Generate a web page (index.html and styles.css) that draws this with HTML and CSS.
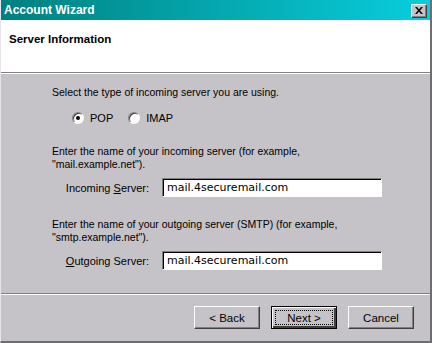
FILE: index.html
```html
<!DOCTYPE html>
<html lang="en">
<head>
    <meta charset="UTF-8">
    <title>Account Wizard</title>
    <link rel="stylesheet" href="styles.css">
</head>
<body>
    <div class="window">
        <div class="titlebar">
            <span class="title">Account Wizard</span>
            <button class="close-btn" aria-label="Close">
                <svg width="8" height="7" viewBox="0 0 8 7">
                    <path d="M0 0h2l2 2.5L6 0h2L5 3.5 8 7H6L4 4.5 2 7H0l3-3.5z" fill="#000"/>
                </svg>
            </button>
        </div>
        <div class="header">
            <h1>Server Information</h1>
        </div>
        <div class="content">
            <p class="line">Select the type of incoming server you are using.</p>
            <div class="radios">
                <label class="radio"><span class="dot checked"></span>POP</label>
                <label class="radio"><span class="dot"></span>IMAP</label>
            </div>
            <p class="para">Enter the name of your incoming server (for example,<br>"mail.example.net").</p>
            <div class="field">
                <label class="field-label">Incoming <u>S</u>erver:</label>
                <div class="input">mail.4securemail.com</div>
            </div>
            <p class="para">Enter the name of your outgoing server (SMTP) (for example,<br>"smtp.example.net").</p>
            <div class="field">
                <label class="field-label"><u>O</u>utgoing Server:</label>
                <div class="input">mail.4securemail.com</div>
            </div>
        </div>
        <div class="footer">
            <button class="btn">&lt; Back</button>
            <button class="btn default"><span class="focus">Next &gt;</span></button>
            <button class="btn">Cancel</button>
        </div>
    </div>
</body>
</html>
```

FILE: styles.css
```css
body, html {
    margin: 0;
    padding: 0;
    font-family: "Liberation Sans", Arial, sans-serif;
    font-size: 10.5px;
    color: #000;
}

.window {
    width: 432px;
    height: 343px;
    box-sizing: border-box;
    background-color: #c5c3c7;
    border-left: 1px solid #e6e4e8;
    border-right: 2px solid #6e6d70;
    border-bottom: 2px solid #6e6d70;
    display: flex;
    flex-direction: column;
}

.titlebar {
    height: 20px;
    background: linear-gradient(to right, #008080, #08cedc);
    display: flex;
    align-items: center;
    justify-content: space-between;
    padding: 0 3px 0 3px;
}

.title {
    color: #fff;
    font-weight: bold;
    font-size: 12px;
}

.close-btn {
    width: 16px;
    height: 14px;
    padding: 0;
    margin-top: 1px;
    background-color: #c5c3c7;
    border: 1px solid;
    border-color: #fff #404040 #404040 #fff;
    box-shadow: inset -1px -1px 0 #808080;
    display: flex;
    align-items: center;
    justify-content: center;
}

.header {
    height: 53px;
    background-color: #fff;
    border-bottom: 1px solid #808080;
    box-shadow: 0 1px 0 #fff;
    box-sizing: border-box;
    padding: 12px 0 0 8px;
}

.header h1 {
    margin: 0;
    font-size: 11.5px;
    line-height: 14px;
    font-weight: bold;
}

.content {
    flex-grow: 1;
    padding: 13px 0 0 51px;
    border-bottom: 1px solid #808080;
    box-shadow: 0 1px 0 #fff;
}

.line, .para {
    margin: 0;
    line-height: 13px;
}

.radios {
    display: flex;
    gap: 15px;
    margin: 12px 0 0 20px;
    height: 13px;
}

.radio {
    display: flex;
    align-items: center;
    gap: 6px;
    font-size: 11px;
}

.dot {
    width: 12px;
    height: 12px;
    box-sizing: border-box;
    border-radius: 50%;
    background-color: #fff;
    border: 1px solid;
    border-color: #808080 #fff #fff #808080;
    box-shadow: inset 1px 1px 0 #404040;
    display: flex;
    align-items: center;
    justify-content: center;
}

.dot.checked::after {
    content: "";
    width: 4px;
    height: 4px;
    border-radius: 50%;
    background-color: #000;
}

.para {
    margin-top: 21px;
}

.field {
    display: flex;
    align-items: center;
    margin-top: 7px;
}

.field-label {
    width: 97px;
    text-align: right;
    margin-right: 13px;
    font-size: 11px;
}

.input {
    width: 220px;
    height: 19px;
    box-sizing: border-box;
    background-color: #fff;
    border: 1px solid;
    border-color: #808080 #fff #fff #808080;
    box-shadow: inset 1px 1px 0 #000;
    padding: 2px 0 0 4px;
    font-size: 11px;
    font-family: "DejaVu Sans", sans-serif;
    line-height: 14px;
}

.footer {
    height: 47px;
    box-sizing: border-box;
    display: flex;
    justify-content: flex-end;
    gap: 11px;
    padding: 12px 16px 0 0;
}

.btn {
    width: 66px;
    height: 23px;
    padding: 0;
    font-family: "Liberation Sans", Arial, sans-serif;
    font-size: 11.5px;
    color: #000;
    background-color: #c5c3c7;
    border: 1px solid;
    border-color: #fff #404040 #404040 #fff;
    box-shadow: inset -1px -1px 0 #808080;
}

.btn.default {
    border: 1px solid #000;
    box-shadow: inset 1px 1px 0 #fff, inset -2px -2px 0 #404040, inset -1px -1px 0 #808080;
    padding: 3px;
}

.btn .focus {
    display: flex;
    align-items: center;
    justify-content: center;
    height: 100%;
    box-sizing: border-box;
    border: 1px dotted #000;
}
```
